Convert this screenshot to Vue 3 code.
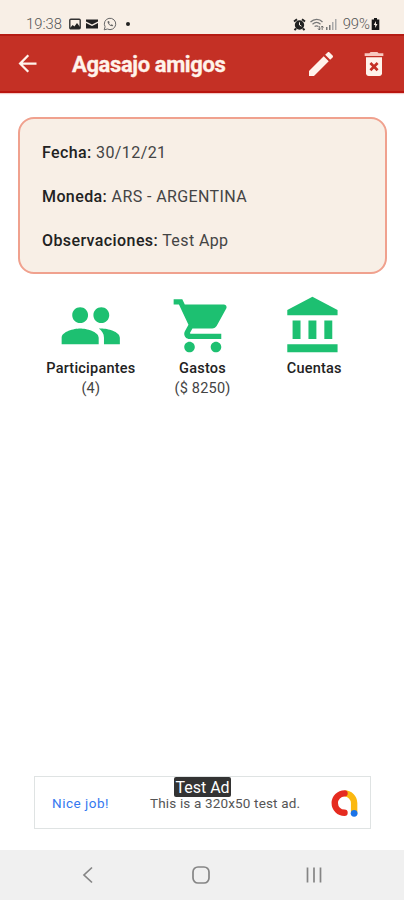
<script setup>
const details = [
    { label: 'Fecha:', value: '30/12/21' },
    { label: 'Moneda:', value: 'ARS - ARGENTINA' },
    { label: 'Observaciones:', value: 'Test App' },
]

const actions = [
    {
        title: 'Participantes',
        count: '(4)',
        path: 'M16 11c1.66 0 2.99-1.34 2.99-3S17.66 5 16 5s-3 1.34-3 3 1.34 3 3 3zm-8 0c1.66 0 2.99-1.34 2.99-3S9.66 5 8 5 5 6.34 5 8s1.34 3 3 3zm0 2c-2.33 0-7 1.17-7 3.5V19h14v-2.5c0-2.33-4.67-3.5-7-3.5zm8 0c-.29 0-.62.02-.97.05 1.16.84 1.97 1.97 1.97 3.45V19h6v-2.5c0-2.33-4.67-3.5-7-3.5z',
    },
    {
        title: 'Gastos',
        count: '($ 8250)',
        path: 'M7 18c-1.1 0-1.99.9-1.99 2S5.9 22 7 22s2-.9 2-2-.9-2-2-2zM1 2v2h2l3.6 7.59-1.35 2.45c-.16.28-.25.61-.25.96 0 1.1.9 2 2 2h12v-2H7.42c-.14 0-.25-.11-.25-.25l.03-.12.9-1.63h7.45c.75 0 1.41-.41 1.75-1.03l3.58-6.49c.08-.14.12-.31.12-.48 0-.55-.45-1-1-1H5.21l-.94-2H1zm16 16c-1.1 0-1.99.9-1.99 2s.89 2 1.99 2 2-.9 2-2-.9-2-2-2z',
    },
    {
        title: 'Cuentas',
        count: '',
        path: 'M4 10v7h3v-7H4zm6 0v7h3v-7h-3zM2 22h19v-3H2v3zm14-12v7h3v-7h-3zm-4.5-9L2 6v2h19V6l-9.5-5z',
    },
]
</script>
<template>
    <div class="screen">
        <div class="status">
            <span class="clock">19:38</span>
            <svg width="12" height="12" viewBox="0 0 12 12">
                <rect x=".8" y="1.3" width="10.4" height="9.4" rx="1" fill="none" stroke="#333" stroke-width="1.4" />
                <path d="M1 10l2.7-3 1.7 1.5L8 5l3 4v1.5H1z" fill="#222" />
            </svg>
            <svg class="s-mail" width="12" height="12" viewBox="0 0 12 12">
                <path d="M0 1.500h12v2L6 6.500 0 3.500zM0 5l6 3 6-3v5.500H0z" fill="#222" />
            </svg>
            <svg class="s-chat" width="14" height="14" viewBox="0 0 14 14" fill="none" stroke="#666">
                <path d="M1.200 12.800l.9-3A5.700 5.700 0 1 1 4.400 12z" />
                <path d="M4.700 4.300c-.8 1.700 2.200 5.300 4.800 5l.7-1-1.600-1-.8.7c-.8-.2-1.500-1.100-1.700-1.800l.5-.8-.6-1.300z" fill="#666" stroke="none" />
            </svg>
            <i class="dot"></i>
            <div class="status-right">
                <svg width="13" height="13" viewBox="0 0 13 13">
                    <circle cx="6.500" cy="7" r="4.700" fill="#222" />
                    <path d="M1 3.500l3-2.300M12 3.500L9 1.200M3 10.500l-1.500 1.700M10 10.500l1.500 1.700" stroke="#222" stroke-width="1.900" />
                    <path d="M6.500 4.300V7l2 1.200" fill="none" stroke="#f8efe6" />
                </svg>
                <svg class="wifi" width="14" height="13" viewBox="0 0 14 13" fill="none" stroke="#777" stroke-width="1.200">
                    <path d="M.5 4c3.500-3.600 9-3.600 12 0M2.500 6.300c2.600-2.300 5.500-2.300 8 0M4.600 8.500c1.300-1 2.500-1 3.800 0" />
                    <path d="M9.300 8v4M8 10.500l1.300 1.500 1.300-1.500M12.200 12V8M11 9.500L12.200 8l1.300 1.500" stroke="#555" stroke-width=".8" />
                </svg>
                <svg class="signal" width="12" height="12" viewBox="0 0 12 12">
                    <path d="M1 9h1.500v3H1zM4 7h1.500v5H4z" fill="#777" />
                    <path d="M7 4h1.500v8H7zM10 1h1.500v11H10z" fill="#aaa" />
                </svg>
                <span class="percent">99%</span>
                <svg width="9" height="12" viewBox="0 0 9 12">
                    <path d="M3 0h3v1.500h2.300V12H.7V1.500H3z" fill="#181818" />
                    <path d="M5 3L2.700 7h1.500v3l2.300-4H5z" fill="#f8efe6" />
                </svg>
            </div>
        </div>
        <header>
            <svg class="back" viewBox="0 0 24 24"><path d="M20 11H7.830l5.590-5.590L12 4l-8 8 8 8 1.410-1.410L7.830 13H20v-2z" /></svg>
            <h1>Agasajo amigos</h1>
            <svg class="edit" viewBox="0 0 24 24"><path d="M3 17.250V21h3.750L17.810 9.940l-3.750-3.750L3 17.250zM20.710 7.040c.39-.39.39-1.020 0-1.410l-2.340-2.340c-.39-.39-1.020-.39-1.410 0l-1.830 1.830 3.750 3.750 1.830-1.830z" /></svg>
            <svg class="trash" viewBox="0 0 24 24">
                <path class="lid" d="M15.500 4l-1-1h-5l-1 1H5v2h14V4z" />
                <path d="M6 7v12c0 1.100.9 2 2 2h8c1.100 0 2-.9 2-2V7H6z" />
                <path class="cross" d="M9.300 11.300l5.400 5.400M14.700 11.300l-5.400 5.400" />
            </svg>
        </header>
        <main>
            <section class="card">
                <p v-for="item in details" :key="item.label">
                    <b>{{ item.label }}</b> {{ item.value }}
                </p>
            </section>
            <nav class="actions">
                <div v-for="action in actions" :key="action.title" class="action">
                    <svg viewBox="0 0 24 24"><path :d="action.path" /></svg>
                    <strong>{{ action.title }}</strong>
                    <span>{{ action.count }}</span>
                </div>
            </nav>
        </main>
        <div class="ad">
            <span class="nice">Nice job!</span>
            <span class="ad-text">This is a 320x50 test ad.</span>
            <svg width="29" height="29" viewBox="0 0 28 28" fill="none" stroke-width="6.200" stroke-linecap="round">
                <path d="M14 4.200A9.300 9.500 0 0 1 23.300 13.500V23" stroke="#fbb80f" stroke-linecap="butt" />
                <path d="M14 4.200A9.400 9.400 0 0 0 14 23" stroke="#e52b20" />
                <circle cx="23.300" cy="23.500" r="3.300" fill="#1a73e8" />
            </svg>
            <span class="tag">Test Ad</span>
        </div>
        <footer>
            <svg width="12" height="18" viewBox="0 0 12 18"><path d="M10 1.500L2 9l8 7.500" /></svg>
            <svg width="18" height="18" viewBox="0 0 18 18"><rect x="1" y="1" width="16" height="16" rx="5" /></svg>
            <svg width="18" height="18" viewBox="0 0 18 18"><path d="M2.500 1.500v15M9 1.500v15M15.500 1.500v15" /></svg>
        </footer>
    </div>
</template>
<style>
body {
    margin: 0;
}
</style>
<style scoped>
.screen {
    width: 404px;
    height: 900px;
    display: flex;
    flex-direction: column;
    overflow: hidden;
    background: #fff;
    font-family: Roboto, "Liberation Sans", sans-serif;
    color: #222;
}

svg {
    display: block;
    flex: none;
}

.status {
    height: 34px;
    box-sizing: border-box;
    padding: 14px 24px 0 26px;
    display: flex;
    align-items: center;
    background: #f8efe6;
    color: #555;
    font-size: 14.8px;
    font-weight: 300;
}

.clock {
    width: 43px;
}

.s-mail {
    margin-left: 5px;
}

.s-chat {
    margin-left: 5px;
}

.dot {
    width: 4px;
    height: 4px;
    margin-left: 9px;
    border-radius: 50%;
    background: #222;
}

.status-right {
    margin-left: auto;
    display: flex;
    align-items: center;
}

.wifi {
    margin-left: 4px;
}

.signal {
    margin-left: 1px;
}

.percent {
    margin: 0 1px 0 6px;
}

header {
    height: 59px;
    box-sizing: border-box;
    display: flex;
    align-items: center;
    padding: 0 14px;
    background: #c43025;
    border-top: 2px solid #b51b13;
    border-bottom: 2px solid #b9150f;
    box-shadow: 0 1px 1px #f3c9c6;
}

header svg {
    fill: #fff3eb;
}

.back {
    width: 27px;
    height: 27px;
}

h1 {
    margin: 2px 0 0 31px;
    width: 233px;
    font-size: 22px;
    line-height: 28px;
    font-weight: 700;
    letter-spacing: -0.38px;
    color: #fff3eb;
    -webkit-text-stroke: 0.3px #fff3eb;
    white-space: nowrap;
}

.edit,
.trash {
    width: 32px;
    height: 32px;
}

.trash {
    margin-left: 21px;
}

header .lid {
    fill: #f8c9c0;
}

.cross {
    stroke: #c43025;
    stroke-width: 2;
}

main {
    flex: 1;
}

.card {
    height: 157px;
    box-sizing: border-box;
    margin: 24px 17px 0 18px;
    padding: 12px 22px;
    border: 2px solid #f0a18e;
    border-radius: 16px;
    background: #f8efe6;
}

.card p {
    margin: 0;
    height: 44px;
    line-height: 44px;
    font-size: 16px;
    letter-spacing: 0.4px;
    color: #444;
    white-space: nowrap;
}

.card b {
    font-weight: 500;
    color: #222;
}

.actions {
    display: grid;
    grid-template-columns: repeat(3, 111.7px);
    margin: 20px 0 0 35px;
}

.action {
    display: flex;
    flex-direction: column;
    align-items: center;
    font-size: 14.5px;
    line-height: 20px;
    letter-spacing: 0.22px;
    color: #444;
}

.action svg {
    width: 63.5px;
    height: 63.5px;
    fill: #1dc071;
}

.action strong {
    margin-top: 1px;
    font-weight: 500;
    color: #222;
}

.ad {
    position: relative;
    width: 337px;
    height: 53px;
    box-sizing: border-box;
    margin: 0 auto 21px 34px;
    padding: 1px 11px 0 17px;
    border: 1px solid #dfe3e3;
    display: flex;
    align-items: center;
    font-size: 13.5px;
    letter-spacing: 0.16px;
    color: #555;
    white-space: nowrap;
}

.nice {
    width: 98px;
    letter-spacing: 0.5px;
    color: #3478f0;
}

.ad-text {
    flex: 1;
}

.tag {
    position: absolute;
    left: 139px;
    top: 0;
    width: 57px;
    height: 20px;
    border-radius: 2px;
    background: #333;
    color: #fff;
    font-size: 16px;
    line-height: 21px;
    letter-spacing: 0;
    text-align: center;
}

footer {
    height: 50px;
    display: flex;
    align-items: center;
    padding-left: 82px;
    background: #f0f0f0;
}

footer svg {
    fill: none;
    stroke: #858585;
    stroke-width: 1.7;
}

footer svg + svg {
    margin-left: 98px;
}

footer svg + svg + svg {
    margin-left: 95px;
}
</style>
